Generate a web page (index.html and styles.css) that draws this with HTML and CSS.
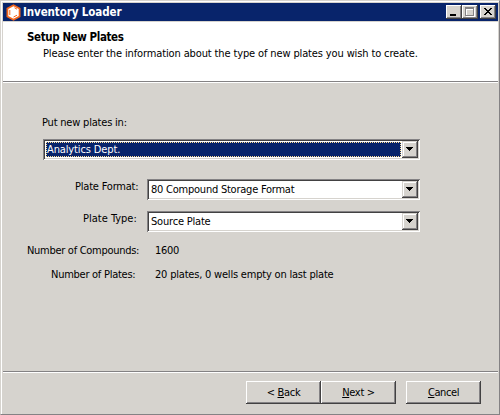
FILE: index.html
```html
<!DOCTYPE html>
<html lang="en">
<head>
<meta charset="utf-8">
<title>Inventory Loader</title>
<link rel="stylesheet" href="styles.css">
</head>
<body>
<div class="window">
  <div class="titlebar">
    <svg class="logo" width="15" height="17" viewBox="0 0 15 17"><path d="M7.500 1.200L13.600 4.500v8L7.500 15.800L1.400 12.500v-8z" fill="#fff" stroke="#f2651b" stroke-width="1.800"/><path d="M8.500 3.800L11 5.200M3.800 6v5M7.500 13L11 11.200" fill="none" stroke="#f2651b"/></svg>
    <span class="caption">Inventory Loader</span>
    <div class="controls">
      <div class="control"><svg width="16" height="14" shape-rendering="crispEdges"><path d="M4 9h6v2H4z"/></svg></div>
      <div class="control"><svg width="16" height="14" shape-rendering="crispEdges"><path d="M4 3h9v9H4z" fill="#fff"/><path d="M3 2h9v9H3z" fill="#848284"/><path d="M4 4h7v6H4z" fill="#d6d3ce"/><path d="M4 4h7v1H5v5H4z" fill="#fff"/></svg></div>
      <div class="control close"><svg width="16" height="14" shape-rendering="crispEdges"><path d="M4 3h2v1h1v1h2V4h1V3h2v1h-1v1h-1v1H9v1h1v1h1v1h1v1h-2V9H9V8H7v1H6v1H4V9h1V8h1V7h1V6H6V5H5V4H4z"/></svg></div>
    </div>
  </div>
  <header class="banner">
    <h1><span class="t-title">Setup New Plates</span></h1>
    <p class="t-sub">Please enter the information about the type of new plates you wish to create.</p>
  </header>
  <main class="form">
    <label class="intro t-put">Put new plates in:</label>
    <div class="combo focused"><div class="value"><span class="t-analytics">Analytics Dept.</span></div><div class="arrow"><svg width="7" height="4" shape-rendering="crispEdges"><path d="M0 0h7v1H6v1H5v1H4v1H3V3H2V2H1V1H0z"/></svg></div></div>
    <div class="row format"><label class="t-format">Plate Format:</label><div class="combo"><div class="value"><span class="t-compound">80 Compound Storage Format</span></div><div class="arrow"><svg width="7" height="4" shape-rendering="crispEdges"><path d="M0 0h7v1H6v1H5v1H4v1H3V3H2V2H1V1H0z"/></svg></div></div></div>
    <div class="row type"><label class="t-type">Plate Type:</label><div class="combo"><div class="value"><span class="t-source">Source Plate</span></div><div class="arrow"><svg width="7" height="4" shape-rendering="crispEdges"><path d="M0 0h7v1H6v1H5v1H4v1H3V3H2V2H1V1H0z"/></svg></div></div></div>
    <div class="row compounds"><label class="t-compounds">Number of Compounds:</label><span class="result t-1600">1600</span></div>
    <div class="row plates"><label class="t-plates">Number of Plates:</label><span class="result t-wells">20 plates, 0 wells empty on last plate</span></div>
  </main>
  <footer class="actions">
    <button class="button"><span class="t-back">&lt; <u>B</u>ack</span></button>
    <button class="button"><span class="t-next"><u>N</u>ext &gt;</span></button>
    <button class="button cancel"><span class="t-cancel"><u>C</u>ancel</span></button>
  </footer>
</div>
</body>
</html>
```
FILE: styles.css
```css
* { box-sizing: border-box; }
body { margin: 0; background: #d6d3ce; color: #000; font: 11px/14px "DejaVu Sans Condensed", "DejaVu Sans", sans-serif; overflow: hidden; white-space: nowrap; }
.window { width: 500px; height: 415px; display: flex; flex-direction: column; padding: 2px 1px 0 2px; border: 1px solid; border-color: #d6d3ce #848284 #848284 #d6d3ce; box-shadow: inset 1px 1px #fff; }
.titlebar { display: flex; align-items: center; height: 18px; background: #08246b; color: #fff; padding-left: 3px; }
.logo { flex: none; margin-right: 2px; }
.caption { font-weight: bold; font-size: 11.500px; letter-spacing: -.1px; }
.controls { display: flex; margin: 0 2px 0 auto; }
.control { width: 16px; height: 14px; background: #d6d3ce; box-shadow: inset -1px -1px #424142, inset 1px 1px #fff, inset -2px -2px #848284; }
.control svg { display: block; }
.close { margin-left: 2px; }
.banner { height: 61px; background: #fff; border-top: 1px solid #d6d3ce; border-bottom: 1px solid #848284; box-shadow: 0 1px #fff; padding: 8px 0 0 24px; }
h1 { margin: 0; font-size: 11.500px; line-height: 14px; letter-spacing: -.4px; }
p { margin: 3px 0 0 16px; }
.form { flex: 1; padding: 34px 78px 0 0; display: flex; flex-direction: column; }
.form label { flex: none; }
.intro { margin-left: 39px; height: 23px; }
.combo { display: flex; height: 21px; padding: 2px; background: #fff; box-shadow: inset 1px 1px #848284, inset -1px -1px #fff, inset 2px 2px #424142, inset -2px -2px #d6d3ce; }
.combo.focused { margin-left: 40px; }
.value { flex: 1; padding: 2px 0 0 2px; }
.focused .value { margin: 1px; padding: 0 0 0 1px; background: #08246b; color: #fff; outline: 1px dotted #ffdf94; outline-offset: -1px; line-height: 16px; }
.arrow { width: 16px; height: 17px; background: #d6d3ce; box-shadow: inset -1px -1px #424142, inset 1px 1px #d6d3ce, inset -2px -2px #848284, inset 2px 2px #fff; padding: 6px 0 0 4px; }
.arrow svg { display: block; }
.row { display: flex; }
.row .combo { flex: 1; }
.row label { padding-top: 1px; }
.format { margin-top: 19px; }
.type { margin-top: 11px; }
.compounds { margin-top: 11px; }
.plates { margin-top: 9px; }
.format label { width: 72px; margin-left: 72px; }
.type label { width: 64px; margin-left: 80px; }
.compounds label { width: 128px; margin-left: 24px; }
.plates label { width: 104px; margin-left: 48px; }
.result { padding-top: 1px; }
.t-sub { letter-spacing: -.13px; }
.t-put { letter-spacing: -.2px; }
.t-analytics { letter-spacing: -.13px; }
.t-format { letter-spacing: -.2px; }
.t-compound { letter-spacing: -.23px; }
.t-type { letter-spacing: 0; }
.t-source { letter-spacing: -.2px; }
.t-compounds { letter-spacing: -.29px; }
.t-plates { letter-spacing: -.26px; }
.t-1600 { letter-spacing: -.3px; }
.t-wells { letter-spacing: -.2px; }
.t-back, .t-next { letter-spacing: -.3px; }
.t-cancel { letter-spacing: -.4px; }
.actions { height: 43px; border-top: 1px solid #848284; box-shadow: inset 0 1px #fff; padding: 9px 17px 0 0; display: flex; justify-content: flex-end; }
.button { width: 75px; height: 23px; margin: 0; padding: 0; border: 0; background: #d6d3ce; color: #000; font: inherit; box-shadow: inset -1px -1px #424142, inset 1px 1px #fff, inset -2px -2px #848284; }
.cancel { margin-left: 10px; }
u { text-underline-offset: 1px; }
```
